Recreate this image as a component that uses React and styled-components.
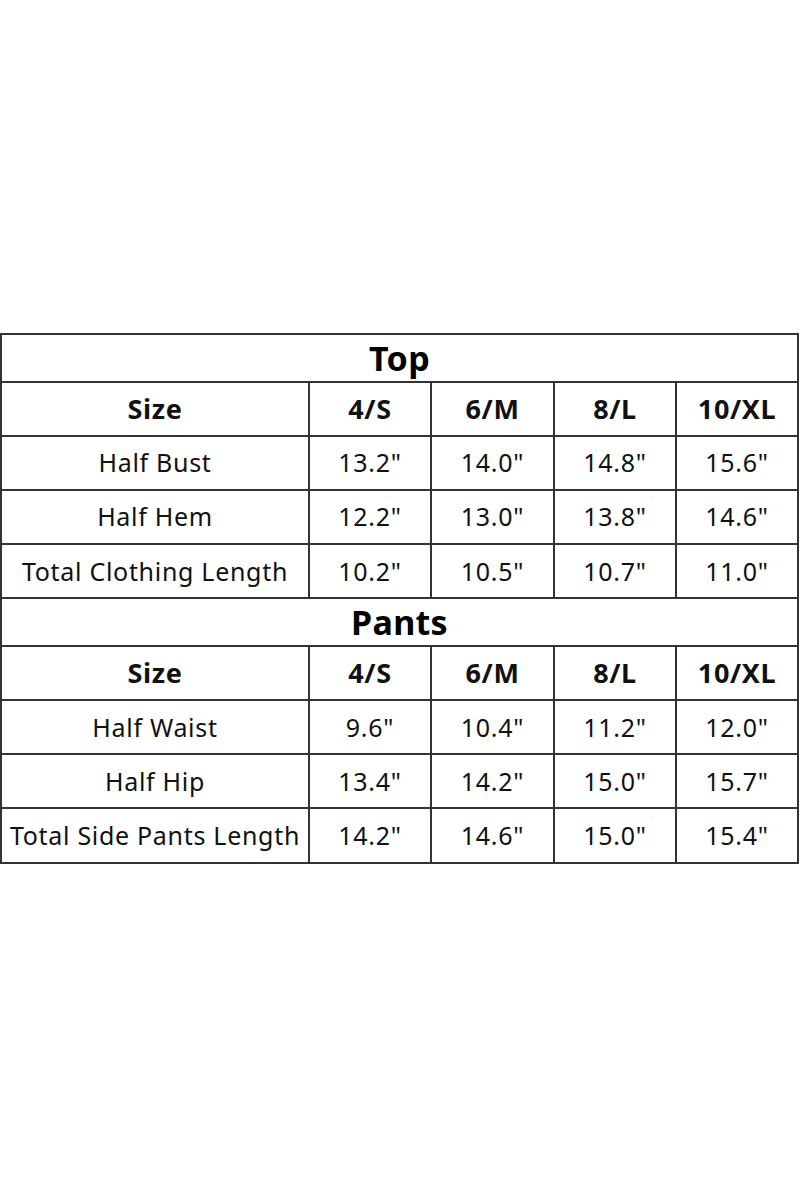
import React from "react";
import styled, { createGlobalStyle } from "styled-components";

const GlobalStyle = createGlobalStyle`
  html, body {
    margin: 0;
    padding: 0;
    background: #fff;
  }
  body {
    font-family: "Noto Sans", "Open Sans", sans-serif;
    color: #000;
  }
`;

const Page = styled.div`
  width: 800px;
  min-height: 1200px;
  display: flex;
  align-items: flex-start;
  padding-top: 333px;
  box-sizing: border-box;
`;

const Table = styled.table`
  width: 797px;
  border-collapse: collapse;
  table-layout: fixed;
  border: 2px solid #333;
`;

const Col = styled.col`
  width: ${(p) => p.$w}px;
`;

const TitleCell = styled.td`
  height: 45.5px;
  padding: 0;
  text-align: center;
  font-weight: 700;
  font-size: 34px;
  border: 2px solid #333;
  line-height: 1;
  letter-spacing: 0.3px;
`;

const Cell = styled.td`
  height: 52.2px;
  padding: 0;
  text-align: center;
  font-size: ${(p) => (p.$bold ? "27px" : "25px")};
  font-weight: ${(p) => (p.$bold ? 700 : 400)};
  letter-spacing: ${(p) => (p.$bold ? "0.6px" : "0.7px")};
  border: 2px solid #333;
  white-space: nowrap;
  line-height: 1;
  color: #111;
`;

const widths = [308, 122, 123, 122, 122];
const sizes = ["4/S", "6/M", "8/L", "10/XL"];

const sections = [
  {
    title: "Top",
    rows: [
      ["Half Bust", '13.2"', '14.0"', '14.8"', '15.6"'],
      ["Half Hem", '12.2"', '13.0"', '13.8"', '14.6"'],
      ["Total Clothing Length", '10.2"', '10.5"', '10.7"', '11.0"'],
    ],
  },
  {
    title: "Pants",
    rows: [
      ["Half Waist", '9.6"', '10.4"', '11.2"', '12.0"'],
      ["Half Hip", '13.4"', '14.2"', '15.0"', '15.7"'],
      ["Total Side Pants Length", '14.2"', '14.6"', '15.0"', '15.4"'],
    ],
  },
];

export default function App() {
  return (
    <>
      <GlobalStyle />
      <Page>
        <Table>
          <colgroup>
            {widths.map((w, i) => (
              <Col key={i} $w={w} />
            ))}
          </colgroup>
          <tbody>
            {sections.map((s) => (
              <React.Fragment key={s.title}>
                <tr>
                  <TitleCell colSpan={5}>{s.title}</TitleCell>
                </tr>
                <tr>
                  <Cell $bold>Size</Cell>
                  {sizes.map((z) => (
                    <Cell $bold key={z}>
                      {z}
                    </Cell>
                  ))}
                </tr>
                {s.rows.map((r) => (
                  <tr key={r[0]}>
                    {r.map((v, i) => (
                      <Cell key={i}>{v}</Cell>
                    ))}
                  </tr>
                ))}
              </React.Fragment>
            ))}
          </tbody>
        </Table>
      </Page>
    </>
  );
}
